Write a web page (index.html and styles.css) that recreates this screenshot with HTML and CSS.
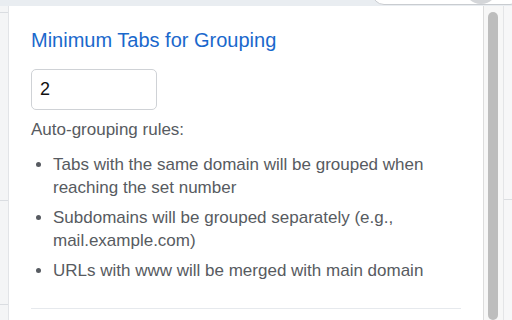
FILE: index.html
```html
<!DOCTYPE html>
<html>
<head>
<meta charset="utf-8">
<link rel="stylesheet" href="styles.css">
</head>
<body>
<div class="topbar">
  <div class="pill"></div>
  <div class="circle"></div>
</div>
<div class="main">
  <div class="gutter-left">
    <div class="gl-line gl-a"></div>
    <div class="gl-line gl-b"></div>
    <div class="gl-line gl-c"></div>
  </div>
  <div class="popup">
    <div class="content">
      <h2 class="title">Minimum Tabs for Grouping</h2>
      <input class="num" type="text" value="2">
      <p class="rules-label">Auto-grouping rules:</p>
      <ul class="rules">
        <li>Tabs with the same domain will be grouped when reaching the set number</li>
        <li>Subdomains will be grouped separately (e.g., mail.example.com)</li>
        <li>URLs with www will be merged with main domain</li>
      </ul>
      <div class="divider"></div>
    </div>
    <div class="scrolltrack"><div class="thumb"></div></div>
  </div>
  <div class="gutter-right">
    <div class="gr-line"></div>
  </div>
</div>
</body>
</html>
```
FILE: styles.css
```css
html, body {
  margin: 0;
  padding: 0;
  width: 512px;
  height: 320px;
  overflow: hidden;
  background: #f6f7f8;
  font-family: "Liberation Sans", Arial, sans-serif;
}
.topbar {
  height: 6px;
  background: #e9edf1;
  display: flex;
  overflow: hidden;
}
.pill {
  flex: none;
  margin-left: 372px;
  margin-top: -20px;
  width: 150px;
  height: 25px;
  border: 1px solid #c9ccd0;
  border-radius: 12px;
  background: #ffffff;
  box-sizing: border-box;
}
.circle {
  flex: none;
  margin-left: -58px;
  margin-top: -30px;
  width: 34px;
  height: 34px;
  border-radius: 50%;
  background: #d4d6d9;
}
.main {
  display: flex;
  height: 314px;
  overflow: hidden;
}
.gutter-left {
  width: 8px;
  background: #f4f5f6;
  border-right: 1px solid #e2e4e7;
  display: flex;
  flex-direction: column;
}
.gl-line {
  height: 1px;
  background: #dadde1;
}
.gl-a { margin-top: 6px; }
.gl-b { margin-top: 187px; }
.gl-c { margin-top: 103px; }
.popup {
  width: 494px;
  background: #ffffff;
  display: flex;
}
.content {
  width: 452px;
  padding: 0 0 0 22px;
  border-right: 1px solid #dcdcdc;
}
.title {
  margin: 23px 0 0 0;
  font-size: 20px;
  font-weight: 400;
  color: #1a68cc;
  line-height: 22px;
}
.num {
  display: block;
  margin-top: 18px;
  width: 126px;
  height: 41px;
  box-sizing: border-box;
  border: 1px solid #cfd2d6;
  border-radius: 5px;
  padding: 0 0 0 8px;
  font-family: inherit;
  font-size: 18px;
  color: #111;
  outline: none;
}
.rules-label {
  margin: 8px 0 0 0;
  font-size: 17px;
  line-height: 23px;
  color: #575b61;
}
.rules {
  margin: 12px 0 0 0;
  padding-left: 22px;
  font-size: 17px;
  line-height: 23px;
  color: #575b61;
}
.rules li {
  margin-bottom: 7px;
}
.divider {
  margin-top: 26px;
  width: 430px;
  height: 1px;
  background: #e6e9ed;
}
.scrolltrack {
  width: 19px;
  background: #f7f7f7;
  padding: 6px 0 0 4px;
  box-sizing: border-box;
  overflow: hidden;
}
.thumb {
  width: 10px;
  height: 308px;
  border-radius: 5px;
  background: #bdbdbd;
}
.gutter-right {
  flex: 1;
  background: #f7f7f8;
  border-left: 1px solid #e4e5e7;
  display: flex;
  flex-direction: column;
}
.gr-line {
  margin-top: 193px;
  height: 1px;
  background: #dcdee1;
}
```
